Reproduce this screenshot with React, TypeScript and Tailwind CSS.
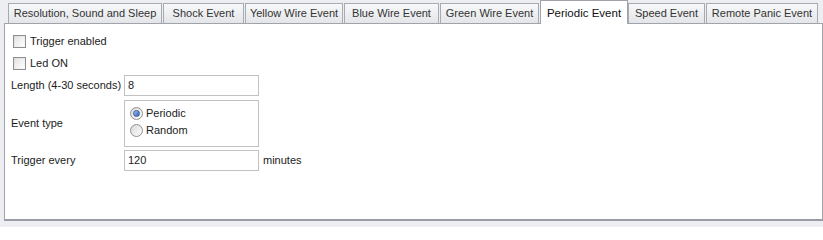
import { useState } from 'react';

const tabs = [
  { label: 'Resolution, Sound and Sleep', w: 'w-[154px] mr-[1px]' },
  { label: 'Shock Event', w: 'w-[81px] mr-[1px]' },
  { label: 'Yellow Wire Event', w: 'w-[98px] mr-[1px]' },
  { label: 'Blue Wire Event', w: 'w-[95px] mr-[1px]' },
  { label: 'Green Wire Event', w: 'w-[99px] mr-[1px]' },
  { label: 'Periodic Event', w: 'w-[88px]' },
  { label: 'Speed Event', w: 'w-[77px] mr-[1px]' },
  { label: 'Remote Panic Event', w: 'w-[112px]' },
];

function CheckBox({ label }: { label: string }) {
  return (
    <label className="flex h-[22px] items-center gap-[4px]">
      <span className="h-[13px] w-[13px] border border-[#8f8f8f] bg-gradient-to-br from-[#dcdcdc] to-[#fbfbfb] p-[1px]">
        <span className="block h-full w-full bg-gradient-to-br from-[#e4e4e4] to-white" />
      </span>
      <span>{label}</span>
    </label>
  );
}

function Radio({ label, checked }: { label: string; checked?: boolean }) {
  return (
    <label className="flex h-[17px] items-center gap-[3px]">
      <span className="flex h-[13px] w-[13px] items-center justify-center rounded-full border border-[#8f8f8f] bg-gradient-to-br from-[#d8d8d8] to-white">
        {checked && (
          <span className="h-[7px] w-[7px] rounded-full border border-[#3a5f9a] bg-gradient-to-br from-[#9fc2f0] to-[#2f5fb8]" />
        )}
      </span>
      <span>{label}</span>
    </label>
  );
}

function TextBox({ value }: { value: string }) {
  return (
    <div className="flex h-[21px] w-[135px] items-center border border-[#c2c2c2] bg-white px-[3px]">
      {value}
    </div>
  );
}

export default function App() {
  const [active] = useState(5);

  return (
    <div
      className="h-[227px] w-[823px] overflow-hidden bg-[#eceef1] text-[11px] text-[#1b1b1b]"
      style={{ fontFamily: 'Tahoma, "Liberation Sans", Arial, sans-serif' }}
    >
      {/* Tab strip */}
      <div className="flex h-[23px] items-end pl-[8px]">
        {tabs.map((t, i) =>
          i === active ? (
            <div
              key={t.label}
              className={`relative z-10 -mb-[1px] flex h-[24px] shrink-0 justify-center whitespace-nowrap border border-b-0 border-[#a0a3aa] bg-white pt-[4px] text-[11.5px] text-[#111] ${t.w}`}
            >
              {t.label}
            </div>
          ) : (
            <div
              key={t.label}
              className={`flex h-[20px] shrink-0 items-center justify-center whitespace-nowrap border border-b-0 border-[#a7aab0] bg-gradient-to-b from-[#f7f8f9] to-[#e4e5e8] text-[#333] ${t.w}`}
            >
              {t.label}
            </div>
          ),
        )}
      </div>

      {/* Page */}
      <div className="ml-[4px] h-[198px] border border-b-2 border-[#a0a3aa] border-b-[#9a9ca4] bg-white pl-[6px] pt-[6px]">
        <div className="pl-[2px]">
          <CheckBox label="Trigger enabled" />
          <CheckBox label="Led ON" />
        </div>

        <div className="mt-[1px] flex items-center">
          <span className="w-[113px]">Length (4-30 seconds)</span>
          <TextBox value="8" />
        </div>

        <div className="mt-[4px] flex items-center">
          <span className="w-[113px]">Event type</span>
          <div className="flex h-[47px] w-[135px] flex-col border border-[#c2c2c2] pl-[5px] pt-[4px]">
            <Radio label="Periodic" checked />
            <Radio label="Random" />
          </div>
        </div>

        <div className="mt-[3px] flex items-center">
          <span className="w-[113px]">Trigger every</span>
          <TextBox value="120" />
          <span className="ml-[4px]">minutes</span>
        </div>
      </div>
    </div>
  );
}
